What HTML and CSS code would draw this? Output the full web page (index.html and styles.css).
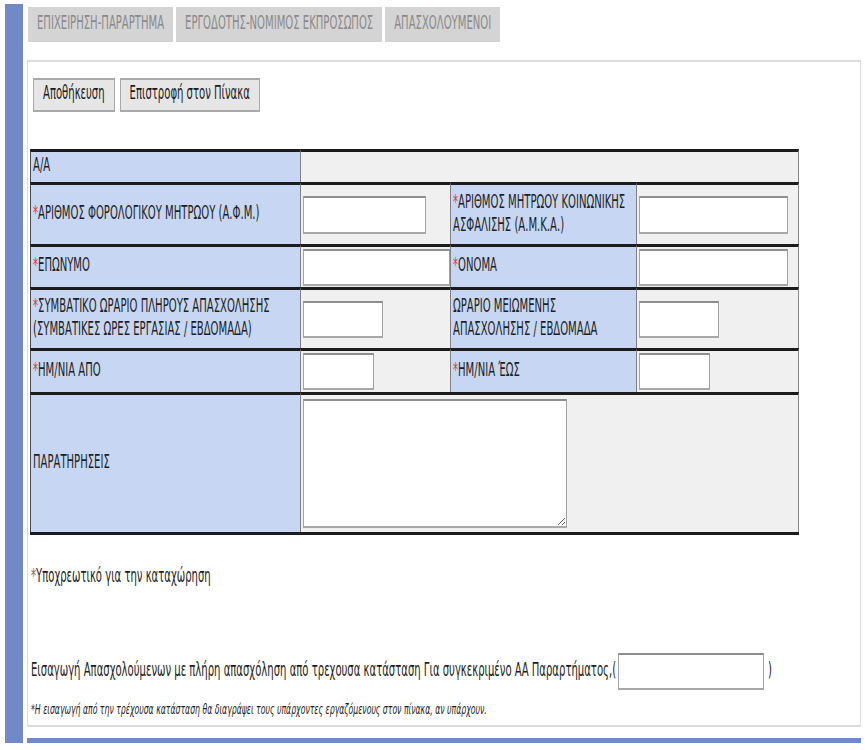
FILE: index.html
```html
<!DOCTYPE html>
<html lang="el">
<head>
<meta charset="utf-8">
<title>Απασχολούμενοι</title>
<link rel="stylesheet" href="styles.css">
</head>
<body>
<div class="page">
  <div class="side"></div>
  <div class="main">
    <div class="tabs">
      <div class="tab"><span class="t">ΕΠΙΧΕΙΡΗΣΗ-ΠΑΡΑΡΤΗΜΑ</span></div>
      <div class="tab"><span class="t">ΕΡΓΟΔΟΤΗΣ-ΝΟΜΙΜΟΣ ΕΚΠΡΟΣΩΠΟΣ</span></div>
      <div class="tab"><span class="t">ΑΠΑΣΧΟΛΟΥΜΕΝΟΙ</span></div>
    </div>
    <div class="panel">
      <div class="buttons">
        <button class="btn" type="button"><span class="t">Αποθήκευση</span></button>
        <button class="btn" type="button"><span class="t">Επιστροφή στον Πίνακα</span></button>
      </div>
      <table class="form">
        <colgroup>
          <col class="c1"><col class="c2"><col class="c3"><col class="c4">
        </colgroup>
        <tr class="r1">
          <td class="lbl"><span class="t">Α/Α</span></td>
          <td class="val" colspan="3"></td>
        </tr>
        <tr class="r2">
          <td class="lbl"><span class="t"><span class="ast">*</span>ΑΡΙΘΜΟΣ ΦΟΡΟΛΟΓΙΚΟΥ ΜΗΤΡΩΟΥ (Α.Φ.Μ.)</span></td>
          <td class="val"><input class="inp w-afm tall" type="text"></td>
          <td class="lbl"><span class="t"><span class="ast">*</span>ΑΡΙΘΜΟΣ ΜΗΤΡΩΟΥ ΚΟΙΝΩΝΙΚΗΣ<br>ΑΣΦΑΛΙΣΗΣ (Α.Μ.Κ.Α.)</span></td>
          <td class="val"><input class="inp w-long tall" type="text"></td>
        </tr>
        <tr class="r3">
          <td class="lbl"><span class="t"><span class="ast">*</span>ΕΠΩΝΥΜΟ</span></td>
          <td class="val"><input class="inp w-full" type="text"></td>
          <td class="lbl"><span class="t"><span class="ast">*</span>ΟΝΟΜΑ</span></td>
          <td class="val"><input class="inp w-long" type="text"></td>
        </tr>
        <tr class="r4">
          <td class="lbl"><span class="t"><span class="ast">*</span>ΣΥΜΒΑΤΙΚΟ ΩΡΑΡΙΟ ΠΛΗΡΟΥΣ ΑΠΑΣΧΟΛΗΣΗΣ<br>(ΣΥΜΒΑΤΙΚΕΣ ΩΡΕΣ ΕΡΓΑΣΙΑΣ / ΕΒΔΟΜΑΔΑ)</span></td>
          <td class="val"><input class="inp w-mid" type="text"></td>
          <td class="lbl"><span class="t">ΩΡΑΡΙΟ ΜΕΙΩΜΕΝΗΣ<br>ΑΠΑΣΧΟΛΗΣΗΣ / ΕΒΔΟΜΑΔΑ</span></td>
          <td class="val"><input class="inp w-mid" type="text"></td>
        </tr>
        <tr class="r5">
          <td class="lbl"><span class="t"><span class="ast">*</span>ΗΜ/ΝΙΑ ΑΠΟ</span></td>
          <td class="val"><input class="inp w-short" type="text"></td>
          <td class="lbl"><span class="t"><span class="ast">*</span>ΗΜ/ΝΙΑ ΈΩΣ</span></td>
          <td class="val"><input class="inp w-short" type="text"></td>
        </tr>
        <tr class="r6">
          <td class="lbl"><span class="t">ΠΑΡΑΤΗΡΗΣΕΙΣ</span></td>
          <td class="val" colspan="3"><textarea class="ta"></textarea></td>
        </tr>
      </table>
      <p class="req"><span class="t"><span class="ast">*</span>Υποχρεωτικό για την καταχώρηση</span></p>
      <div class="import">
        <span class="t">Εισαγωγή Απασχολούμενων με πλήρη απασχόληση από τρεχουσα κατάσταση Για συγκεκριμένο ΑΑ Παραρτήματος,(</span>
        <input class="inp w-imp" type="text">
        <span class="t">)</span>
      </div>
      <p class="note"><span class="t">*Η εισαγωγή από την τρέχουσα κατάσταση θα διαγράψει τους υπάρχοντες εργαζόμενους στον πίνακα, αν υπάρχουν.</span></p>
    </div>
    <div class="bottombar"></div>
  </div>
</div>
</body>
</html>
```
FILE: styles.css
```css
* { box-sizing: border-box; }
html, body { margin: 0; background: #fff; }
body {
  font-family: "DejaVu Sans Condensed", "DejaVu Sans", sans-serif;
  font-stretch: condensed;
  font-size: 11.2px;
  line-height: 12.7px;
  color: #1e1e1e;
}
/* glyphs of the reference are tall and narrow */
.t {
  display: inline-block;
  transform: scaleY(1.7);
  vertical-align: middle;
}
.ast { color: #e0393e; }

.page { display: flex; height: 750px; padding: 4px 0 7px 5px; }
.side { width: 18px; flex: none; background: #7089c7; }
.main { width: 834px; margin-left: 4px; display: flex; flex-direction: column; }

.tabs { display: flex; gap: 3px; margin: 3px 0 0 1px; }
.tab {
  height: 35px; padding: 0 9px;
  display: flex; align-items: center;
  background: #d4d4d4; color: #8a8a8a;
}

.panel {
  margin-top: 18px; height: 667px;
  border: 1px solid #dcdcdc; border-top-width: 2px; border-bottom-width: 2px;
  padding: 0 1px 0 2px;
}
.buttons { display: flex; gap: 5px; padding: 16px 0 0 3px; }
.btn {
  height: 34px; padding: 0 9px;
  border: 1px solid #a9a9a9; border-top-width: 2px; border-bottom-width: 2px;
  background: #e6e6e6; color: #1a1a1a;
  font: inherit;
}

.form {
  margin-top: 37px; width: 769px;
  table-layout: fixed;
  border-collapse: separate; border-spacing: 0;
  border-bottom: 3px solid #1c1c1c;
}
.c1 { width: 270px; }
.c2 { width: 150px; }
.c3 { width: 186px; }
.c4 { width: 163px; }
.form td {
  border-top: 3px solid #1c1c1c;
  padding: 0 0 0 2px;
  vertical-align: middle;
}
.form td:first-child { border-left: 1px solid #4a4a4a; }
.form td:last-child { border-right: 1px solid #8a8a8a; }
.form td + td { border-left: 1px solid #808080; }
.lbl { background: #c6d6f3; }
.val { background: #f0f0f0; }
.r1 td { height: 33px; }
.r2 td { height: 62px; }
.r3 td { height: 43px; }
.r4 td { height: 61px; }
.r5 td { height: 44px; }
.r6 td { height: 140px; }

.inp {
  display: block; height: 37px; padding: 0 2px;
  border: 1px solid #a3a3a3; border-top: 2px solid #8e8e8e; border-bottom: 2px solid #a8a8a8;
  background: #fff; font: inherit;
}
.tall { height: 38px; }
.w-afm { width: 123px; }
.w-full { width: 147px; }
.w-long { width: 149px; }
.w-mid { width: 80px; }
.w-short { width: 71px; }
.w-imp { width: 146px; margin-left: 2px; margin-right: 4px; }
.ta {
  display: block; width: 264px; height: 129px;
  border: 1px solid #a3a3a3; border-top: 2px solid #8e8e8e; border-bottom: 2px solid #a8a8a8;
  background: #fff; font: inherit;
}

.req { margin: 32px 0 0 1px; height: 20px; display: flex; align-items: center; }
.import { margin: 66px 0 0 1px; display: flex; align-items: center; }
.note { margin: 13px 0 0 1px; font-size: 8.6px; font-style: italic; }

.bottombar { height: 5px; margin-top: 11px; background: #7089c7; }
```
